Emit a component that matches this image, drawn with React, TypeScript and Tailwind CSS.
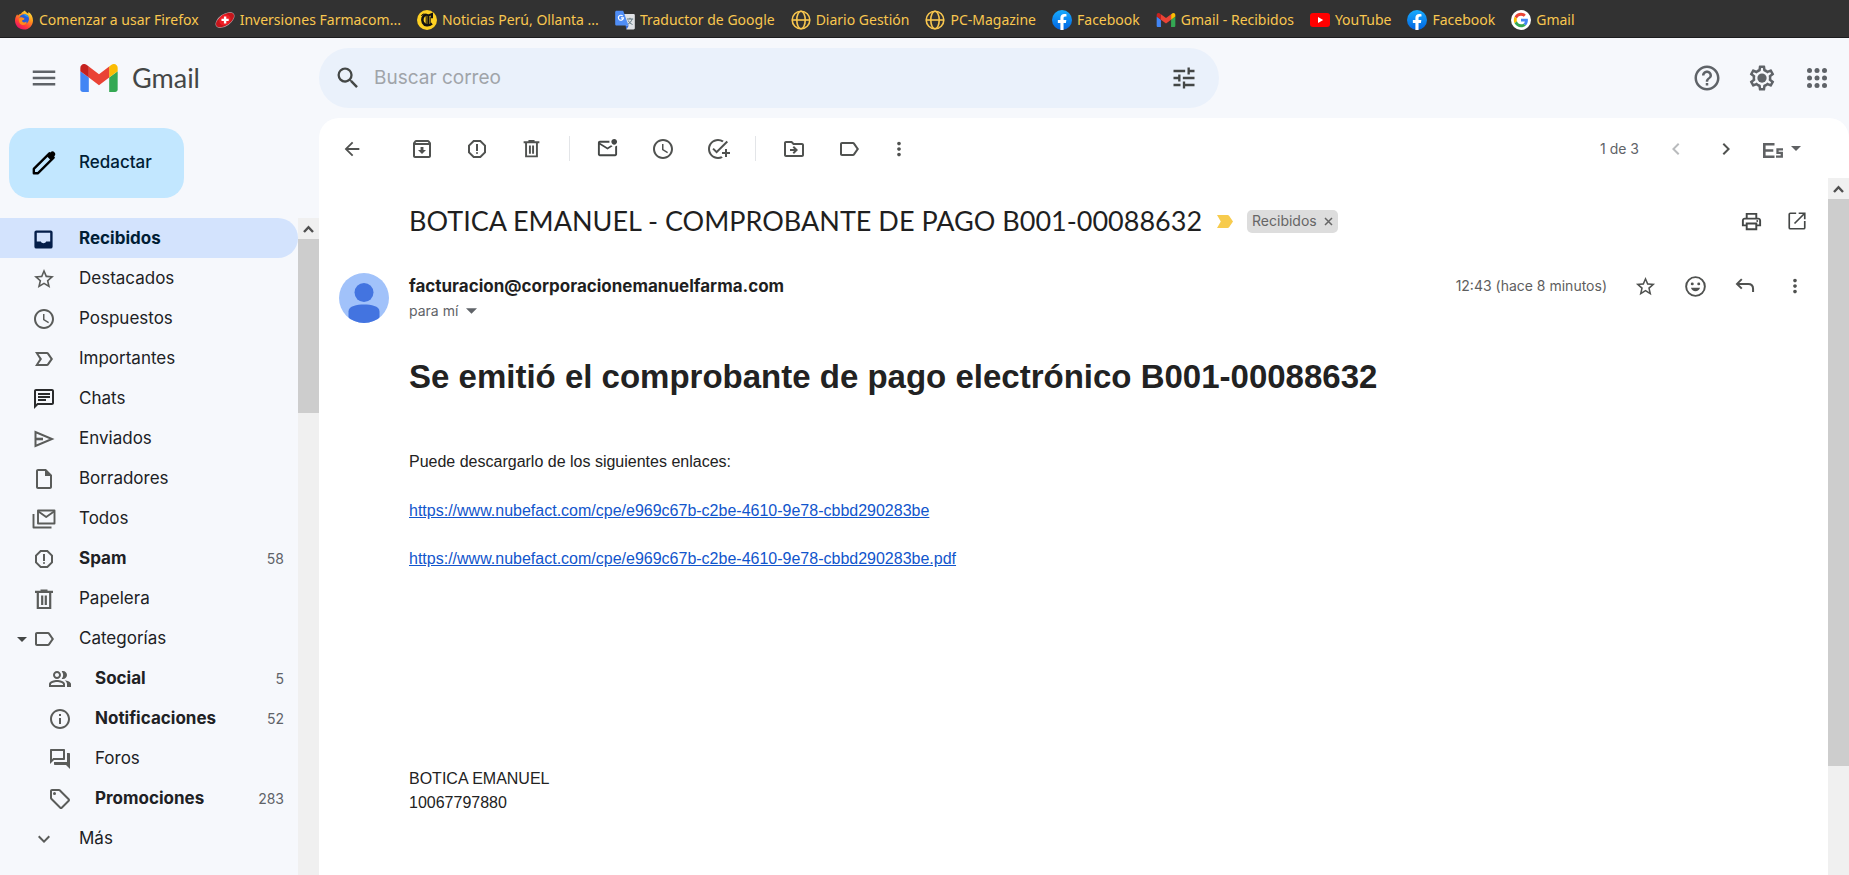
import React from "react";
import {
  MdAccessTime,
  MdExpandMore,
  MdInfoOutline,
  MdLabelImportantOutline,
  MdLabelOutline,
  MdMenu,
  MdHelpOutline,
  MdMoreVert,
  MdOutlineAddTask,
  MdOutlineArchive,
  MdOutlineChat,
  MdOutlineDriveFileMove,
  MdOutlineForum,
  MdOutlineInsertDriveFile,
  MdOutlineLocalOffer,
  MdOutlineMarkEmailUnread,
  MdOutlinePeopleAlt,
  MdOutlinePrint,
  MdOutlineReport,
  MdSearch,
  MdStarBorder,
  MdTune,
  MdArrowBack,
  MdChevronLeft,
  MdChevronRight,
} from "react-icons/md";

type IconProps = { className?: string };
type IconType = React.ComponentType<IconProps>;

/* ---------- Bookmark icons ---------- */

const FirefoxIcon = () => (
  <svg viewBox="0 0 20 20" className="size-5 shrink-0" aria-hidden="true">
    <defs>
      <linearGradient id="fx" x1="0.9" y1="0" x2="0.3" y2="1">
        <stop offset="0" stopColor="#fff24a" />
        <stop offset="0.4" stopColor="#ff9a1a" />
        <stop offset="0.75" stopColor="#ff3b3b" />
        <stop offset="1" stopColor="#e5116b" />
      </linearGradient>
    </defs>
    <path fill="url(#fx)" d="M3.200 4.200c.2.8.6 1.200 1 1.400C5 4.300 6 3.800 7 3.700 8 1.800 10 1.200 11 .5c.3 1.500 2 2 3.200 3.200l.3-1.700c2.800 1.700 4.500 5 4.500 8.400 0 5-4 9.100-9 9.100s-9-4-9-9c0-2.700 1-4.700 2.200-6.300z" />
    <circle cx="10.200" cy="9" r="4.800" fill="#2a5bd7" />
    <path fill="#1c9bf0" d="M9.500 4.300c2.600-.4 4.700 1.200 5.400 3.400-1.500-1-3.800-1-5.400-3.400z" />
    <path fill="#ff8a1a" d="M5 8.500c1.200-1.600 3-1.500 4.500-.6 1.500.2 1 1.800-.5 2.200-1 .3-1.200 1.100-.5 1.700 1.100 1 2.700.6 4-.3.500 2.300-1.800 3.800-3.800 3.500C6 14.600 4.300 11.800 5 8.500z" />
  </svg>
);

const FarmaIcon = () => (
  <svg viewBox="0 0 20 20" className="size-5 shrink-0" aria-hidden="true">
    <ellipse cx="10" cy="10" rx="10.800" ry="6" transform="rotate(-35 10 10)" fill="#b9a4a8" />
    <ellipse cx="10" cy="10" rx="10.300" ry="5.300" transform="rotate(-35 10 10)" fill="#c4161c" />
    <ellipse cx="10" cy="9.800" rx="6" ry="5.200" transform="rotate(-35 10 10)" fill="#ee1c24" />
    <path d="M8.900 6.400h2.400v2.300h2.400V11h-2.400v2.400H8.900V11H6.500V8.700h2.400z" fill="#fff" />
  </svg>
);

const ComercioIcon = () => (
  <svg viewBox="0 0 20 20" className="size-5 shrink-0" aria-hidden="true">
    <circle cx="10" cy="10" r="10" fill="#fdd023" />
    <path fill="none" stroke="#111" strokeWidth="2.600" d="M9 4.800C5.500 5.500 4.500 9.500 6 12.700c1.500 3 5.500 3.600 9 .8" />
    <path fill="none" stroke="#111" strokeWidth="2" d="M8.500 4.500l3 1 3.500-1.500v4.200M11.300 5.500V15" />
    <path fill="none" stroke="#111" strokeWidth="1" d="M9.200 6v8.500M13.200 6.500v6.500M4.500 6c.5-1.800 2-2.500 4-1.500" />
  </svg>
);

const TranslateIcon = () => (
  <svg viewBox="0 0 20 20" className="size-5 shrink-0" aria-hidden="true">
    <path d="M9 4h9.500c.8 0 1.300.5 1.300 1.300v13c0 .7-.5 1.200-1.300 1.200h-7z" fill="#dfe1e5" />
    <path d="M12 9h6.200M15 7.800V9M17 9c-.5 2.500-2.300 4.200-4.200 5.300M13.200 10.500c.8 1.800 2.500 3.200 4.300 4" stroke="#5f7680" strokeWidth="1" fill="none" />
    <path d="M10.500 15.500h3.300l-2.300 4z" fill="#3367d6" />
    <path d="M1.500.8h6.700l5.300 14.700h-12C.8 15.500.2 15 .2 14.200v-12C.2 1.400.8.8 1.500.8z" fill="#4f8df5" />
    <path d="M7.700 6a2.500 2.500 0 1 0 .7 1.900H6" stroke="#fff" strokeWidth="1.200" fill="none" />
  </svg>
);

const GlobeIcon = () => (
  <svg viewBox="0 0 20 20" className="size-5 shrink-0" fill="none" stroke="#f9c74f" strokeWidth="1.600" aria-hidden="true">
    <circle cx="10" cy="10" r="8.800" />
    <ellipse cx="10" cy="10" rx="4.200" ry="8.800" />
    <path d="M1.200 10h17.600" />
  </svg>
);

const FacebookIcon = () => (
  <svg viewBox="0 0 20 20" className="size-5 shrink-0" aria-hidden="true">
    <defs>
      <linearGradient id="fb" x1="0" y1="0" x2="0" y2="1">
        <stop offset="0" stopColor="#18acfe" />
        <stop offset="1" stopColor="#0163e0" />
      </linearGradient>
    </defs>
    <circle cx="10" cy="10" r="10" fill="url(#fb)" />
    <path fill="#fff" d="M13.900 12.900l.45-2.900h-2.800V8.150c0-.8.4-1.560 1.650-1.560h1.270V4.150s-1.150-.2-2.260-.2c-2.300 0-3.800 1.400-3.800 3.900V10H5.850v2.900h2.560v7a10.200 10.200 0 0 0 3.140 0v-7z" />
  </svg>
);

const GmailMark = ({ className }: IconProps) => (
  <svg viewBox="52 42 88 66" className={className} aria-hidden="true">
    <path fill="#4285f4" d="M58 108h14V74L52 59v43c0 3.320 2.690 6 6 6" />
    <path fill="#34a853" d="M120 108h14c3.320 0 6-2.690 6-6V59l-20 15" />
    <path fill="#fbbc04" d="M120 48v26l20-15v-8c0-7.420-8.470-11.650-14.400-7.200" />
    <path fill="#ea4335" d="M72 74V48l24 18 24-18v26L96 92" />
    <path fill="#c5221f" d="M52 51v8l20 15V48l-5.600-4.200c-5.940-4.450-14.400-.22-14.400 7.200" />
  </svg>
);

const YouTubeIcon = () => (
  <svg viewBox="0 0 20 20" className="size-5 shrink-0" aria-hidden="true">
    <rect y="3" width="20" height="14" rx="3" fill="#f00" />
    <path d="M8 7l5.200 3L8 13z" fill="#fff" />
  </svg>
);

const GoogleIcon = () => (
  <svg viewBox="0 0 20 20" className="size-5 shrink-0" aria-hidden="true">
    <circle cx="10" cy="10" r="10" fill="#fff" />
    <g transform="translate(2.800 2.800) scale(.3)">
      <path fill="#ea4335" d="M24 9.500c3.540 0 6.710 1.220 9.210 3.600l6.850-6.850C35.900 2.380 30.470 0 24 0 14.620 0 6.510 5.380 2.560 13.220l7.980 6.190C12.430 13.720 17.740 9.500 24 9.500z" />
      <path fill="#4285f4" d="M46.980 24.550c0-1.570-.15-3.090-.38-4.550H24v9.020h12.940c-.58 2.960-2.260 5.480-4.780 7.180l7.730 6c4.510-4.180 7.090-10.360 7.090-17.650z" />
      <path fill="#fbbc05" d="M10.530 28.590c-.48-1.450-.76-2.990-.76-4.590s.27-3.140.76-4.590l-7.980-6.190C.92 16.460 0 20.120 0 24c0 3.880.92 7.540 2.560 10.780l7.970-6.190z" />
      <path fill="#34a853" d="M24 48c6.480 0 11.930-2.130 15.890-5.810l-7.730-6c-2.150 1.450-4.920 2.300-8.160 2.300-6.260 0-11.570-4.220-13.470-9.910l-7.980 6.190C6.510 42.620 14.620 48 24 48z" />
    </g>
  </svg>
);

/* ---------- Mail icons ---------- */

const GearIcon = ({ className }: IconProps) => (
  <svg viewBox="0 0 24 24" fill="currentColor" className={className} aria-hidden="true">
    <path d="M19.430 12.980c.04-.32.07-.64.07-.98 0-.34-.03-.66-.07-.98l2.110-1.650c.19-.15.24-.42.12-.64l-2-3.460c-.09-.16-.26-.25-.44-.25-.06 0-.12.01-.17.03l-2.490 1c-.52-.4-1.080-.73-1.690-.98l-.38-2.650C14.460 2.180 14.250 2 14 2h-4c-.25 0-.46.18-.49.42l-.38 2.650c-.61.25-1.170.59-1.690.98l-2.490-1c-.06-.02-.12-.03-.18-.03-.17 0-.34.09-.43.25l-2 3.460c-.13.22-.07.49.12.64l2.110 1.650c-.04.32-.07.65-.07.98 0 .33.03.66.07.98l-2.110 1.650c-.19.15-.24.42-.12.64l2 3.460c.09.16.26.25.44.25.06 0 .12-.01.17-.03l2.490-1c.52.4 1.080.73 1.690.98l.38 2.650c.03.24.24.42.49.42h4c.25 0 .46-.18.49-.42l.38-2.650c.61-.25 1.170-.59 1.690-.98l2.490 1c.06.02.12.03.18.03.17 0 .34-.09.43-.25l2-3.460c.12-.22.07-.49-.12-.64l-2.110-1.650zm-1.980-1.710c.04.31.05.52.05.73 0 .21-.02.43-.05.73l-.14 1.130.89.7 1.080.84-.7 1.210-1.270-.51-1.040-.42-.9.68c-.43.32-.84.56-1.250.73l-1.060.43-.16 1.130-.2 1.350h-1.400l-.19-1.350-.16-1.130-1.060-.43c-.43-.18-.83-.41-1.230-.71l-.91-.7-1.060.43-1.270.51-.7-1.210 1.080-.84.89-.7-.14-1.130c-.03-.31-.05-.54-.05-.74s.02-.43.05-.73l.14-1.130-.89-.7-1.080-.84.7-1.210 1.270.51 1.040.42.9-.68c.43-.32.84-.56 1.250-.73l1.060-.43.16-1.130.2-1.350h1.390l.19 1.350.16 1.130 1.060.43c.43.18.83.41 1.230.71l.91.7 1.060-.43 1.270-.51.7 1.210-1.070.85-.89.7.14 1.130z" />
    <circle cx="12" cy="12" r="3.700" />
  </svg>
);

const AppsIcon = ({ className }: IconProps) => (
  <svg viewBox="0 0 24 24" fill="currentColor" className={className} aria-hidden="true">
    {[6, 12, 18].map((y) => [6, 12, 18].map((x) => <circle key={`${x}-${y}`} cx={x} cy={y} r="2" />))}
  </svg>
);

const PencilIcon = ({ className }: IconProps) => (
  <svg viewBox="0 0 24 24" className={className} aria-hidden="true">
    <path fill="none" stroke="currentColor" strokeWidth="2.200" strokeLinejoin="round" d="M2.600 21.400v-3.900L17 3.100l3.900 3.900L6.500 21.400z" />
    <path fill="currentColor" d="M14.500 5.600l3.600-3.600c1.100-1.100 2.500-1 3.500 0s1.200 2.400.1 3.500l-3.700 3.700z" />
  </svg>
);

const InboxIcon = ({ className }: IconProps) => (
  <svg viewBox="0 0 24 24" fill="currentColor" className={className} aria-hidden="true">
    <path fillRule="evenodd" d="M4.500 2.500h15a2 2 0 0 1 2 2v15a2 2 0 0 1-2 2h-15a2 2 0 0 1-2-2v-15a2 2 0 0 1 2-2zM5 5v9h4.200c.5 1 1.500 1.800 2.800 1.800s2.300-.8 2.800-1.800H19V5z" />
  </svg>
);

const SendIcon = ({ className }: IconProps) => (
  <svg viewBox="0 0 24 24" fill="none" stroke="currentColor" strokeWidth="2" className={className} aria-hidden="true">
    <path d="M3.500 5v14L20 12z" />
    <path d="M3.500 12H11" strokeWidth="2.600" />
  </svg>
);

const TrashIcon = ({ className }: IconProps) => (
  <svg viewBox="0 0 24 24" fill="none" stroke="currentColor" strokeWidth="2.200" className={className} aria-hidden="true">
    <path d="M3 4.800h18M8.500 3.500h7M5.800 6v15h12.400V6" />
    <path d="M10.200 8.500v9.500M13.800 8.500v9.500" />
  </svg>
);

const StackedMailIcon = ({ className }: IconProps) => (
  <svg viewBox="0 0 24 24" fill="none" stroke="currentColor" strokeWidth="1.900" strokeLinejoin="round" className={className} aria-hidden="true">
    <path d="M6 3.500h16.500v13H6z" />
    <path d="M6.500 4.500L14.200 10l7.800-5.500M1.500 7v13.500h18" />
  </svg>
);

const SmileIcon = ({ className }: IconProps) => (
  <svg viewBox="0 0 24 24" fill="none" stroke="currentColor" strokeWidth="2.200" className={className} aria-hidden="true">
    <circle cx="12" cy="12" r="10.700" />
    <circle cx="8.300" cy="9" r="1.700" fill="currentColor" stroke="none" />
    <circle cx="15.700" cy="9" r="1.700" fill="currentColor" stroke="none" />
    <path d="M6.800 13.500h10.400c-.8 2.600-2.700 4-5.200 4s-4.400-1.400-5.200-4z" fill="currentColor" stroke="none" />
  </svg>
);

const ReplyIcon = ({ className }: IconProps) => (
  <svg viewBox="0 0 24 24" fill="none" stroke="currentColor" strokeWidth="2.200" className={className} aria-hidden="true">
    <path d="M8.500 4.500L3.300 9.700l5.200 5.200M3.500 9.700h12c3.300 0 5.300 2 5.300 5.300v3.500" />
  </svg>
);

const OpenInNewIcon = ({ className }: IconProps) => (
  <svg viewBox="0 0 24 24" fill="none" stroke="currentColor" strokeWidth="2" strokeLinejoin="round" className={className} aria-hidden="true">
    <path d="M11 2.700H4c-.8 0-1.300.5-1.300 1.300v16c0 .8.500 1.300 1.300 1.300h16c.8 0 1.300-.5 1.300-1.300v-8" />
    <path d="M14 2.700h7.300V10M21 3L9 15" strokeLinejoin="miter" />
  </svg>
);

const EsIcon = () => (
  <svg viewBox="0 0 20 15" className="h-[15px] w-5" fill="none" stroke="currentColor" strokeWidth="2.600" aria-hidden="true">
    <path d="M11.500 1.300H1.300v12.400h10.200M1.300 7.500h9" />
    <path d="M20 6.300h-5.500v3.600h4.300v3.800h-5.800" strokeWidth="2.300" />
  </svg>
);

const Caret = ({ className }: IconProps) => (
  <svg viewBox="0 0 10 5" fill="currentColor" className={className} aria-hidden="true">
    <path d="M0 0h10L5 5z" />
  </svg>
);

/* ---------- Data ---------- */

const bookmarks: { label: string; icon: React.ReactNode }[] = [
  { label: "Comenzar a usar Firefox", icon: <FirefoxIcon /> },
  { label: "Inversiones Farmacom...", icon: <FarmaIcon /> },
  { label: "Noticias Perú, Ollanta ...", icon: <ComercioIcon /> },
  { label: "Traductor de Google", icon: <TranslateIcon /> },
  { label: "Diario Gestión", icon: <GlobeIcon /> },
  { label: "PC-Magazine", icon: <GlobeIcon /> },
  { label: "Facebook", icon: <FacebookIcon /> },
  { label: "Gmail - Recibidos", icon: <GmailMark className="h-[14px] w-5 shrink-0" /> },
  { label: "YouTube", icon: <YouTubeIcon /> },
  { label: "Facebook", icon: <FacebookIcon /> },
  { label: "Gmail", icon: <GoogleIcon /> },
];

type NavEntry = { label: string; icon: IconType; count?: string; bold?: boolean; active?: boolean; caret?: boolean; sub?: boolean; dark?: boolean };

const nav: NavEntry[] = [
  { label: "Recibidos", icon: InboxIcon, bold: true, active: true },
  { label: "Destacados", icon: MdStarBorder },
  { label: "Pospuestos", icon: MdAccessTime },
  { label: "Importantes", icon: MdLabelImportantOutline },
  { label: "Chats", icon: MdOutlineChat, dark: true },
  { label: "Enviados", icon: SendIcon },
  { label: "Borradores", icon: MdOutlineInsertDriveFile },
  { label: "Todos", icon: StackedMailIcon },
  { label: "Spam", icon: MdOutlineReport, bold: true, count: "58" },
  { label: "Papelera", icon: TrashIcon },
  { label: "Categorías", icon: MdLabelOutline, caret: true },
  { label: "Social", icon: MdOutlinePeopleAlt, bold: true, count: "5", sub: true },
  { label: "Notificaciones", icon: MdInfoOutline, bold: true, count: "52", sub: true },
  { label: "Foros", icon: MdOutlineForum, sub: true },
  { label: "Promociones", icon: MdOutlineLocalOffer, bold: true, count: "283", sub: true },
  { label: "Más", icon: MdExpandMore },
];

/* ---------- Building blocks ---------- */

function IconButton({ label, icon: Icon, box, size = "size-6", tone = "text-[#505250]" }: { label: string; icon: IconType; box: string; size?: string; tone?: string }) {
  return (
    <button type="button" aria-label={label} className={`flex shrink-0 items-center justify-center ${box} ${tone}`}>
      <Icon className={size} />
    </button>
  );
}

function ScrollTrack({ thumb }: { thumb: string }) {
  return (
    <div aria-hidden="true" className="flex w-[21px] shrink-0 flex-col bg-[#f0f0f0]">
      <div className="flex h-[21px] items-center justify-center text-[#505050]">
        <svg viewBox="0 0 11 8" className="h-2 w-[11px]" fill="none" stroke="currentColor" strokeWidth="2.400">
          <path d="M1 7l4.500-4.800L10 7" />
        </svg>
      </div>
      <div className={`bg-[#cdcdcd] ${thumb}`} />
    </div>
  );
}

function NavItem({ item }: { item: NavEntry }) {
  const Icon = item.icon;
  return (
    <li>
      <a
        href="#"
        className={`flex h-10 items-center rounded-r-full pt-0.5 pr-3.5 text-[17px] ${item.sub ? "pl-12" : "pl-8"} ${item.active ? "bg-[#d3e3fd]" : ""}`}
      >
        <span className={`relative flex shrink-0 ${item.active ? "text-[#041e49]" : item.dark ? "text-[#2a2b2c]" : "text-[#5a5c5a]"}`}>
          {item.caret && <Caret className="absolute top-[10px] -left-[15px] h-[5px] w-[10px] text-[#444746]" />}
          <Icon className={item.active ? "size-[23px]" : "size-6"} />
        </span>
        <span className={`flex-1 ${item.active ? "ml-6" : "ml-[23px]"} ${item.bold ? "font-bold" : ""} ${item.active ? "text-[#001d35]" : "text-[#202124]"}`}>
          {item.label}
        </span>
        {item.count && <span className="text-sm text-[#5f6368]">{item.count}</span>}
      </a>
    </li>
  );
}

const Divider = () => <div className="mx-[10px] h-[25px] w-px shrink-0 bg-[#e3e5e8]" />;

/* ---------- Page ---------- */

export default function App() {
  return (
    <div className="flex h-screen flex-col overflow-hidden bg-[#f6f8fc] font-['Inter',sans-serif] text-[#202124]">
      <nav
        aria-label="Marcadores"
        className="flex h-[38px] shrink-0 items-center gap-4 overflow-hidden border-b border-[#1c1c1e] bg-[#323232] px-3.5 pt-0.5 font-['Noto_Sans',sans-serif] text-sm whitespace-nowrap text-[#f9c74f]"
      >
        {bookmarks.map((b, i) => (
          <a key={i} href="#" className="flex items-center gap-[5px]">
            {b.icon}
            {b.label}
          </a>
        ))}
      </nav>

      <header className="flex h-20 shrink-0 items-center">
        <div className="flex w-[319px] shrink-0 items-center">
          <IconButton label="Menú principal" icon={MdMenu} box="ml-6 size-10" size="size-[30px]" tone="text-[#5f6368]" />
          <a href="#" className="ml-4 flex items-center gap-[14px] font-['Lato',sans-serif] text-[27px] text-[#444746]">
            <GmailMark className="h-7 w-[38px]" />
            Gmail
          </a>
        </div>
        <form role="search" className="flex h-[60px] w-[900px] min-w-0 items-center rounded-full bg-[#eaf1fb] px-[15px]">
          <IconButton label="Buscar" icon={MdSearch} box="size-7" size="size-7" tone="text-[#444746]" />
          <input
            type="search"
            aria-label="Buscar correo"
            placeholder="Buscar correo"
            className="ml-3 min-w-0 flex-1 bg-transparent text-[19px] outline-none placeholder:text-[#a0a4a9]"
          />
          <IconButton label="Mostrar opciones de búsqueda" icon={MdTune} box="size-10" size="size-7" tone="text-[#444746]" />
        </form>
        <div className="ml-auto flex items-center gap-[5px] pr-[7px] pl-4">
          <IconButton label="Asistencia" icon={MdHelpOutline} box="size-[50px]" size="size-[30px]" tone="text-[#5f6368]" />
          <IconButton label="Configuración" icon={GearIcon} box="size-[50px]" size="size-[30px]" tone="text-[#5f6368]" />
          <IconButton label="Aplicaciones de Google" icon={AppsIcon} box="size-[50px]" size="size-[30px]" tone="text-[#5f6368]" />
        </div>
      </header>

      <div className="flex min-h-0 flex-1">
        <aside className="flex w-[319px] shrink-0 flex-col">
          <div className="pt-2.5 pb-5 pl-[9px]">
            <button type="button" className="flex h-[70px] items-center gap-[22px] rounded-[20px] bg-[#c2e7ff] pr-8 pl-[22px] text-[17px] font-medium text-[#001d35]">
              <PencilIcon className="size-[26px] text-black" />
              Redactar
            </button>
          </div>
          <div className="flex min-h-0 flex-1">
            <nav aria-label="Carpetas" className="min-w-0 flex-1 overflow-hidden">
              <ul>
                {nav.map((item) => (
                  <NavItem key={item.label} item={item} />
                ))}
              </ul>
            </nav>
            <ScrollTrack thumb="h-[174px]" />
          </div>
        </aside>

        <main className="flex min-w-0 flex-1 flex-col rounded-t-[20px] bg-white">
          <div role="toolbar" aria-label="Acciones del mensaje" className="flex h-[60px] shrink-0 items-center pt-px pl-3">
            <IconButton label="Volver a Recibidos" icon={MdArrowBack} box="mr-[21px] h-10 w-[42px]" size="size-[22px]" />
            <IconButton label="Archivar" icon={MdOutlineArchive} box="h-10 w-[55px]" />
            <IconButton label="Marcar como spam" icon={MdOutlineReport} box="h-10 w-[55px]" />
            <IconButton label="Eliminar" icon={TrashIcon} box="h-10 w-[55px]" size="size-[21px]" />
            <Divider />
            <IconButton label="Marcar como no leído" icon={MdOutlineMarkEmailUnread} box="h-10 w-[55px]" size="size-[23px]" tone="text-[#444746]" />
            <IconButton label="Posponer" icon={MdAccessTime} box="h-10 w-[55px]" />
            <IconButton label="Añadir a Tasks" icon={MdOutlineAddTask} box="h-10 w-[55px]" />
            <Divider />
            <IconButton label="Mover a" icon={MdOutlineDriveFileMove} box="h-10 w-[55px]" />
            <IconButton label="Etiquetas" icon={MdLabelOutline} box="h-10 w-[55px]" />
            <IconButton label="Más" icon={MdMoreVert} box="h-10 w-[45px]" size="size-[22px]" />
            <div className="ml-auto flex items-center pr-12 text-sm text-[#5f6368]">
              <span className="mr-3">1 de 3</span>
              <IconButton label="Más recientes" icon={MdChevronLeft} box="h-10 w-[50px]" tone="text-[#b9bbbd]" />
              <IconButton label="Más antiguos" icon={MdChevronRight} box="h-10 w-[50px]" />
              <button type="button" aria-label="Herramientas de introducción de texto" className="ml-3 flex h-10 items-center gap-2 pt-1 text-[#5f6163]">
                <EsIcon />
                <Caret className="mb-1 h-[5px] w-[10px]" />
              </button>
            </div>
          </div>

          <div className="flex min-h-0 flex-1">
            <article className="min-w-0 flex-1 overflow-hidden">
              <div className="flex items-center pt-5 pr-2 pl-[90px]">
                <h2 className="font-['Lato',sans-serif] text-[27px] leading-[46px] whitespace-nowrap text-[#1f1f1f]">
                  BOTICA EMANUEL - COMPROBANTE DE PAGO B001-00088632
                </h2>
                <svg viewBox="0 0 16 13" className="ml-[15px] h-[13px] w-4 shrink-0" fill="#f7cb4d" role="img" aria-label="Importante">
                  <path d="M0 0h10.500c.7 0 1.200.3 1.600.8L16 6.500l-3.900 5.700c-.4.500-.9.8-1.600.8H0l3.800-6.500z" />
                </svg>
                <span className="ml-3.5 flex h-[23px] shrink-0 items-center gap-[7px] rounded-[5px] bg-[#ddd] px-[5px] text-sm text-[#666]">
                  Recibidos
                  <button type="button" aria-label="Quitar la etiqueta Recibidos">
                    <svg viewBox="0 0 9 9" className="size-[9px]" fill="none" stroke="currentColor" strokeWidth="1.500" aria-hidden="true">
                      <path d="M1 1l7 7M8 1L1 8" />
                    </svg>
                  </button>
                </span>
                <div className="ml-auto flex">
                  <IconButton label="Imprimir todo" icon={MdOutlinePrint} box="h-10 w-[46px]" size="size-[23px]" tone="text-[#444746]" />
                  <IconButton label="Abrir en una ventana nueva" icon={OpenInNewIcon} box="h-10 w-[46px]" size="size-5" tone="text-[#444746]" />
                </div>
              </div>

              <div className="flex pt-[26px] pr-2 pl-5">
                <svg viewBox="0 0 50 50" className="mt-[3px] size-[50px] shrink-0" role="img" aria-label="Imagen de perfil">
                  <defs>
                    <clipPath id="avatar">
                      <circle cx="25" cy="25" r="25" />
                    </clipPath>
                  </defs>
                  <circle cx="25" cy="25" r="25" fill="#a1c2fa" />
                  <g clipPath="url(#avatar)" fill="#4374e0">
                    <circle cx="25" cy="19.500" r="9.500" />
                    <path d="M9.500 38.500C9.500 33 18 31.500 25 31.500S40.500 33 40.500 38.500V50h-31z" />
                  </g>
                </svg>
                <div className="ml-5 min-w-0 flex-1 pt-px">
                  <h3 className="text-[17px] leading-[30px] font-bold text-[#1f1f1f]">facturacion@corporacionemanuelfarma.com</h3>
                  <button type="button" className="flex items-center gap-2 text-sm leading-5 text-[#5f6368]">
                    para mí
                    <Caret className="h-[6px] w-[11px]" />
                  </button>
                </div>
                <div className="flex h-8 shrink-0 items-center text-sm text-[#5e5e5e]">
                  <span className="mr-[13px]">12:43 (hace 8 minutos)</span>
                  <IconButton label="Destacar" icon={MdStarBorder} box="size-[50px]" size="size-[23px]" />
                  <IconButton label="Añadir reacción" icon={SmileIcon} box="size-[50px]" size="size-[21px]" />
                  <IconButton label="Responder" icon={ReplyIcon} box="size-[50px]" size="size-[22px]" />
                  <IconButton label="Más opciones" icon={MdMoreVert} box="size-[50px]" size="size-[22px]" />
                </div>
              </div>

              <div className="pr-8 pl-[90px] font-['Liberation_Sans',Arial,sans-serif] text-base leading-6 text-[#222]">
                <h1 className="mt-8 text-[33px] leading-[44px] font-bold">Se emitió el comprobante de pago electrónico B001-00088632</h1>
                <p className="mt-[51px]">Puede descargarlo de los siguientes enlaces:</p>
                <p className="mt-[25px]">
                  <a href="https://www.nubefact.com/cpe/e969c67b-c2be-4610-9e78-cbbd290283be" className="text-[#1155cc] underline">
                    https://www.nubefact.com/cpe/e969c67b-c2be-4610-9e78-cbbd290283be
                  </a>
                </p>
                <p className="mt-6">
                  <a href="https://www.nubefact.com/cpe/e969c67b-c2be-4610-9e78-cbbd290283be.pdf" className="text-[#1155cc] underline">
                    https://www.nubefact.com/cpe/e969c67b-c2be-4610-9e78-cbbd290283be.pdf
                  </a>
                </p>
                <p className="mt-[196px]">
                  BOTICA EMANUEL
                  <br />
                  10067797880
                </p>
              </div>
            </article>
            <ScrollTrack thumb="h-[567px]" />
          </div>
        </main>
      </div>
    </div>
  );
}
